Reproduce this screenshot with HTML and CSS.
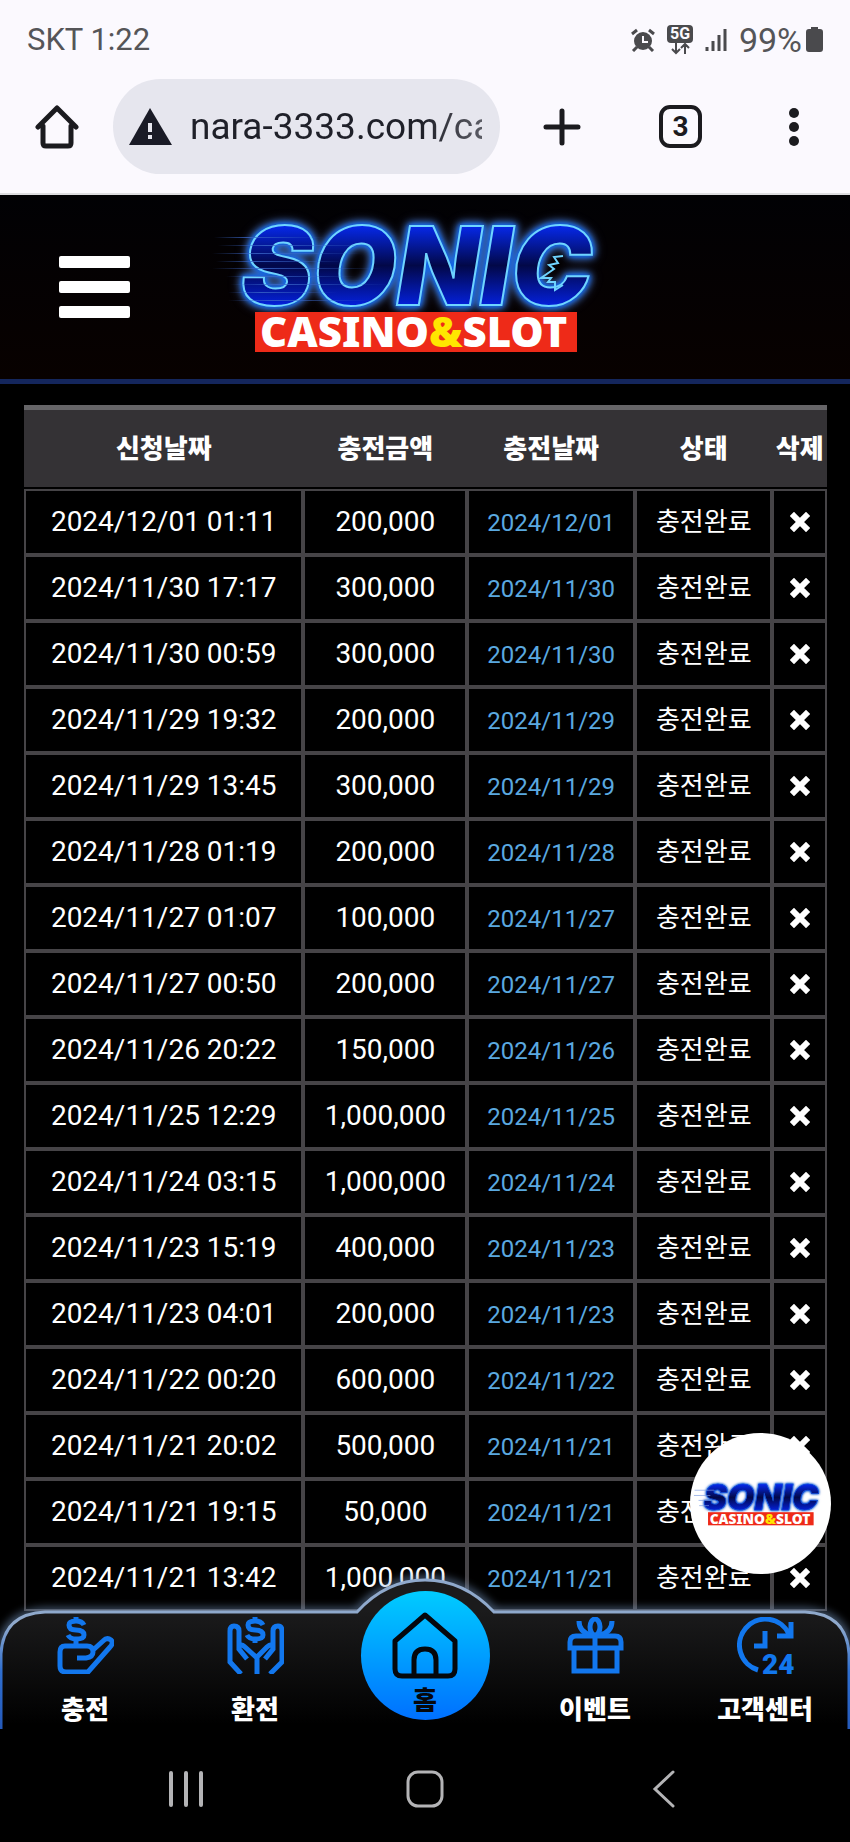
FILE: index.html
```html
<!DOCTYPE html>
<html lang="ko">
<head>
    <meta charset="UTF-8">
    <meta name="viewport" content="width=device-width, initial-scale=1.0">
    <title>SONIC CASINO&amp;SLOT</title>
    <link rel="stylesheet" href="styles.css">
</head>
<body>
    <!-- shared symbols -->
    <svg class="symbols" aria-hidden="true">
        <defs>
            <linearGradient id="sonicFill" x1="0" y1="0" x2="0" y2="1">
                <stop offset="0.2" stop-color="#0628e8"/>
                <stop offset="0.5" stop-color="#020848"/>
                <stop offset="0.8" stop-color="#0420d8"/>
            </linearGradient>
            <linearGradient id="speedFill" x1="0" x2="1">
                <stop offset="0" stop-color="#3a66c8" stop-opacity="0"/>
                <stop offset="0.3" stop-color="#3a66c8" stop-opacity="0.8"/>
                <stop offset="1" stop-color="#3a66c8" stop-opacity="0"/>
            </linearGradient>
            <filter id="glow" x="-10%" y="-30%" width="120%" height="160%">
                <feGaussianBlur stdDeviation="4"/>
            </filter>
        </defs>
        <symbol id="x" viewBox="0 0 20 20">
            <path d="M4 4 16 16M16 4 4 16" stroke="#fff" stroke-width="6" stroke-linecap="square" stroke-linejoin="round"/>
        </symbol>
    </svg>

    <div class="phone">
        <div class="status-bar">
            <span>SKT 1:22</span>
            <div class="status-icons">
                <svg width="24" height="24" viewBox="0 0 24 24">
                    <circle cx="12" cy="13" r="9" fill="#4a4a4d"/>
                    <path d="M1 6 6 2M18 2l5 4M6 19l-4 4M18 19l4 4" stroke="#4a4a4d" stroke-width="3"/>
                    <path d="M12 8v6h5" fill="none" stroke="#fbf9fe" stroke-width="2"/>
                </svg>
                <svg class="five-g" width="26" height="30" viewBox="0 0 26 30">
                    <rect width="26" height="18" rx="4" fill="#4a4a4d"/>
                    <text x="13" y="14" text-anchor="middle">5G</text>
                    <path d="M9 18v9M5 24l4 4 4-4M18 29v-9M14 23l4-4 4 4" fill="none" stroke="#4a4a4d" stroke-width="2"/>
                </svg>
                <svg width="22" height="24" viewBox="0 0 22 24">
                    <path d="M2 19v4M8 13v10M14 7v16M20 1v22" stroke="#4a4a4d" stroke-width="3"/>
                </svg>
                <span class="battery-level">99%</span>
                <svg class="battery" width="17" height="25" viewBox="0 0 17 25">
                    <path d="M5 0h7v2h2q3 0 3 3v17q0 3-3 3H3q-3 0-3-3V5q0-3 3-3h2z" fill="#4a4a4d"/>
                </svg>
            </div>
        </div>

        <div class="browser-bar">
            <button class="bar-button" type="button" aria-label="Home">
                <svg width="44" height="44" viewBox="0 0 44 44" fill="none" stroke="#1b1b1f" stroke-width="5" stroke-linejoin="round" stroke-linecap="round">
                    <path d="M3 22 22 3l19 19M8 21v17q0 3 3 3h22q3 0 3-3V21"/>
                </svg>
            </button>
            <div class="address">
                <svg width="43" height="37" viewBox="0 0 43 37">
                    <path d="M21 0 43 37H0z" fill="#1a1b26"/>
                    <path d="M21 15v9M21 27v4" stroke="#e6e6ee" stroke-width="4"/>
                </svg>
                <input type="text" aria-label="Address" value="nara-3333.com/ca">
            </div>
            <button class="bar-button new-tab" type="button" aria-label="New tab">
                <svg width="38" height="38" viewBox="0 0 38 38" stroke="#1b1b1f" stroke-width="5" stroke-linecap="round">
                    <path d="M19 3v32M3 19h32"/>
                </svg>
            </button>
            <button class="bar-button" type="button" aria-label="Tabs"><span class="tab-count">3</span></button>
            <button class="bar-button" type="button" aria-label="More">
                <svg width="10" height="38" viewBox="0 0 10 38" fill="#1b1b1f">
                    <circle cx="5" cy="5" r="5"/><circle cx="5" cy="19" r="5"/><circle cx="5" cy="33" r="5"/>
                </svg>
            </button>
        </div>

        <div class="site">
            <header class="site-header">
                <button class="menu-button" type="button" aria-label="Menu">
                    <span></span><span></span><span></span>
                </button>
                <a class="logo" href="#" aria-label="SONIC CASINO&amp;SLOT">
                    <svg viewBox="0 0 430 170">
                        <text class="logo-word" x="41" y="103">SONIC</text>
                        <path d="M363 54l-9 1 4 6-9 2 5 4-13 9 10 0-3 4 7 0 0 8 8-5" fill="none" stroke="#6fd4ff" stroke-width="2"/>
                        <g fill="url(#speedFill)">
                            <rect x="14" y="35" width="110" height="1"/>
                            <rect x="18" y="43" width="160" height="1"/>
                            <rect x="12" y="51" width="150" height="1"/>
                            <rect x="16" y="59" width="130" height="1"/>
                            <rect x="12" y="66" width="170" height="1"/>
                            <rect x="26" y="74" width="130" height="1"/>
                            <rect x="30" y="82" width="160" height="1"/>
                            <rect x="28" y="90" width="110" height="1"/>
                            <rect x="28" y="98" width="150" height="1"/>
                        </g>
                        <rect x="55" y="110" width="322" height="40" fill="#ee2a18"/>
                        <text class="logo-sub" x="60" y="145">CASINO<tspan class="logo-amp">&amp;</tspan>SLOT</text>
                    </svg>
                </a>
            </header>

            <main>
                <table class="history">
                    <colgroup>
                        <col class="col-request"><col class="col-amount"><col class="col-date"><col class="col-state"><col class="col-delete">
                    </colgroup>
                    <thead>
                        <tr><th>신청날짜</th><th>충전금액</th><th>충전날짜</th><th>상태</th><th>삭제</th></tr>
                    </thead>
                    <tbody>
                        <tr><td>2024/12/01 01:11</td><td>200,000</td><td><a href="#">2024/12/01</a></td><td class="state">충전완료</td><td><button type="button" aria-label="삭제"><svg><use href="#x"/></svg></button></td></tr>
                        <tr><td>2024/11/30 17:17</td><td>300,000</td><td><a href="#">2024/11/30</a></td><td class="state">충전완료</td><td><button type="button" aria-label="삭제"><svg><use href="#x"/></svg></button></td></tr>
                        <tr><td>2024/11/30 00:59</td><td>300,000</td><td><a href="#">2024/11/30</a></td><td class="state">충전완료</td><td><button type="button" aria-label="삭제"><svg><use href="#x"/></svg></button></td></tr>
                        <tr><td>2024/11/29 19:32</td><td>200,000</td><td><a href="#">2024/11/29</a></td><td class="state">충전완료</td><td><button type="button" aria-label="삭제"><svg><use href="#x"/></svg></button></td></tr>
                        <tr><td>2024/11/29 13:45</td><td>300,000</td><td><a href="#">2024/11/29</a></td><td class="state">충전완료</td><td><button type="button" aria-label="삭제"><svg><use href="#x"/></svg></button></td></tr>
                        <tr><td>2024/11/28 01:19</td><td>200,000</td><td><a href="#">2024/11/28</a></td><td class="state">충전완료</td><td><button type="button" aria-label="삭제"><svg><use href="#x"/></svg></button></td></tr>
                        <tr><td>2024/11/27 01:07</td><td>100,000</td><td><a href="#">2024/11/27</a></td><td class="state">충전완료</td><td><button type="button" aria-label="삭제"><svg><use href="#x"/></svg></button></td></tr>
                        <tr><td>2024/11/27 00:50</td><td>200,000</td><td><a href="#">2024/11/27</a></td><td class="state">충전완료</td><td><button type="button" aria-label="삭제"><svg><use href="#x"/></svg></button></td></tr>
                        <tr><td>2024/11/26 20:22</td><td>150,000</td><td><a href="#">2024/11/26</a></td><td class="state">충전완료</td><td><button type="button" aria-label="삭제"><svg><use href="#x"/></svg></button></td></tr>
                        <tr><td>2024/11/25 12:29</td><td>1,000,000</td><td><a href="#">2024/11/25</a></td><td class="state">충전완료</td><td><button type="button" aria-label="삭제"><svg><use href="#x"/></svg></button></td></tr>
                        <tr><td>2024/11/24 03:15</td><td>1,000,000</td><td><a href="#">2024/11/24</a></td><td class="state">충전완료</td><td><button type="button" aria-label="삭제"><svg><use href="#x"/></svg></button></td></tr>
                        <tr><td>2024/11/23 15:19</td><td>400,000</td><td><a href="#">2024/11/23</a></td><td class="state">충전완료</td><td><button type="button" aria-label="삭제"><svg><use href="#x"/></svg></button></td></tr>
                        <tr><td>2024/11/23 04:01</td><td>200,000</td><td><a href="#">2024/11/23</a></td><td class="state">충전완료</td><td><button type="button" aria-label="삭제"><svg><use href="#x"/></svg></button></td></tr>
                        <tr><td>2024/11/22 00:20</td><td>600,000</td><td><a href="#">2024/11/22</a></td><td class="state">충전완료</td><td><button type="button" aria-label="삭제"><svg><use href="#x"/></svg></button></td></tr>
                        <tr><td>2024/11/21 20:02</td><td>500,000</td><td><a href="#">2024/11/21</a></td><td class="state">충전완료</td><td><button type="button" aria-label="삭제"><svg><use href="#x"/></svg></button></td></tr>
                        <tr><td>2024/11/21 19:15</td><td>50,000</td><td><a href="#">2024/11/21</a></td><td class="state">충전완료</td><td><button type="button" aria-label="삭제"><svg><use href="#x"/></svg></button></td></tr>
                        <tr><td>2024/11/21 13:42</td><td>1,000,000</td><td><a href="#">2024/11/21</a></td><td class="state">충전완료</td><td><button type="button" aria-label="삭제"><svg><use href="#x"/></svg></button></td></tr>
                    </tbody>
                </table>
            </main>

            <a class="floating" href="#" aria-label="SONIC CASINO&amp;SLOT">
                <svg viewBox="0 0 430 170">
                    <text class="logo-word" x="41" y="103">SONIC</text>
                    <path d="M14 43h60M12 59h50M26 74h40M28 90h30" stroke="#7a9ae0" stroke-width="2"/>
                    <rect x="55" y="110" width="322" height="40" fill="#ee2a18"/>
                    <text class="logo-sub" x="60" y="145">CASINO<tspan class="logo-amp">&amp;</tspan>SLOT</text>
                </svg>
            </a>

            <nav class="site-nav">
                <svg class="nav-shape" viewBox="0 0 850 159" preserveAspectRatio="none">
                    <defs>
                        <linearGradient id="navFill" x1="0" y1="0" x2="0" y2="1">
                            <stop offset="0.2" stop-color="#1b1b1c"/>
                            <stop offset="0.95" stop-color="#000"/>
                        </linearGradient>
                        <linearGradient id="navLine" x1="0" y1="0" x2="0" y2="1">
                            <stop offset="0.3" stop-color="#8fa9cc"/>
                            <stop offset="0.6" stop-color="#2f6fd0"/>
                            <stop offset="1" stop-color="#2458b8"/>
                        </linearGradient>
                    </defs>
                    <path d="M1 162V84Q3 44 45 42H357Q386 10 425 10T494 42H805Q847 44 849 84V162" fill="none" stroke="#7c9cc8" stroke-width="8" opacity="0.6" filter="url(#glow)"/>
                    <path d="M1 162V84Q3 44 45 42H357Q386 10 425 10T494 42H805Q847 44 849 84V162" fill="url(#navFill)" stroke="url(#navLine)" stroke-width="3"/>
                </svg>
                <a href="#">
                    <svg class="nav-icon" viewBox="0 0 57 57" fill="none" stroke="#1277ee" stroke-width="5">
                        <path d="M27 8q-2-4-8-4-7 0-7 4 0 5 7 5 8 0 8 5 0 4-8 4-6 0-8-4M19 0v4M19 21v7"/>
                        <path d="M20 41h9q7-1 7-6 0-6-6-6H8q-5 0-5 6v14q0 6 6 6h22l22-25q4-4 1-7-4-3-8 1L35 34"/>
                    </svg>
                    <span>충전</span>
                </a>
                <a href="#">
                    <svg class="nav-icon" viewBox="0 0 57 57" fill="none" stroke="#1277ee" stroke-width="5">
                        <path d="M36 8q-2-4-8-4-7 0-7 4 0 5 7 5 8 0 8 5 0 4-8 4-6 0-8-4M28 0v4M28 21v5"/>
                        <path d="M14 57 3 45V14q0-5 4-5 5 0 5 5v18l8 10M12 28q3-1 6 2l12 11v16M43 57l12-12V14q0-5-4-5-5 0-5 5v18L38 42M46 28q-3-1-6 2L30 40"/>
                    </svg>
                    <span>환전</span>
                </a>
                <a class="nav-home" href="#">
                    <svg width="68" height="68" viewBox="0 0 68 68" fill="none" stroke="#05070c" stroke-width="5" stroke-linejoin="round">
                        <path d="M4 30 34 4l30 26v28q0 7-7 7H11q-7 0-7-7zM23 65V49q0-11 11-11t11 11v16"/>
                    </svg>
                    <span>홈</span>
                </a>
                <a href="#">
                    <svg class="nav-icon" viewBox="0 0 57 57" fill="none" stroke="#1277ee" stroke-width="5">
                        <path d="M3 31v-6q0-6 6-6h39q6 0 6 6v6zM7 32v22h43V32M28 18v37"/>
                        <ellipse cx="28" cy="10" rx="5" ry="8"/>
                        <path d="M12 4q0 11 12 14M45 4q0 11-12 14"/>
                    </svg>
                    <span>이벤트</span>
                </a>
                <a href="#">
                    <svg class="nav-icon" viewBox="0 0 57 57" fill="none" stroke="#1277ee" stroke-width="5">
                        <path d="M21 53A26 26 0 1 1 52 17M54 5v14H40M28 14v15H17"/>
                        <text class="icon-text" x="25" y="57">24</text>
                    </svg>
                    <span>고객센터</span>
                </a>
            </nav>
        </div>

        <div class="system-nav">
            <button type="button" aria-label="Recents">
                <svg width="34" height="38" viewBox="0 0 34 38" stroke="#b4b4b6" stroke-width="4" stroke-linecap="round"><path d="M2 3v32M17 3v32M32 3v32"/></svg>
            </button>
            <button type="button" aria-label="Home">
                <svg width="38" height="38" viewBox="0 0 38 38" fill="none" stroke="#b4b4b6" stroke-width="3"><rect x="2" y="2" width="34" height="34" rx="10"/></svg>
            </button>
            <button type="button" aria-label="Back">
                <svg width="24" height="38" viewBox="0 0 24 38" fill="none" stroke="#b4b4b6" stroke-width="3" stroke-linecap="round"><path d="M21 2 3 19l18 17"/></svg>
            </button>
        </div>
    </div>
</body>
</html>
```

FILE: styles.css
```css
* {
    box-sizing: border-box;
}
body {
    margin: 0;
    background: #000;
    color: #fff;
    font-family: Roboto, "Noto Sans CJK KR", sans-serif;
}
button {
    padding: 0;
    border: none;
    background: none;
    cursor: pointer;
}
a {
    color: inherit;
    text-decoration: none;
}
svg {
    display: block;
}
.symbols {
    position: absolute;
    width: 0;
    height: 0;
}
.phone {
    display: flex;
    flex-direction: column;
    height: 100vh;
}

/* status bar */
.status-bar {
    display: flex;
    justify-content: space-between;
    align-items: center;
    height: 79px;
    padding: 0 27px;
    background: #fbf9fe;
    color: #555558;
    font-size: 31px;
}
.status-icons {
    display: flex;
    align-items: center;
    gap: 12px;
}
.battery-level {
    font-size: 34px;
}
.battery {
    margin-left: -8px;
}
.five-g text {
    fill: #fbf9fe;
    font-size: 16px;
    font-weight: 700;
}

/* browser bar */
.browser-bar {
    display: flex;
    padding-bottom: 19px;
    border-bottom: 2px solid #dddde0;
    background: #fbf9fe;
}
.bar-button {
    display: flex;
    justify-content: center;
    align-items: center;
    width: 113px;
    height: 95px;
}
.new-tab {
    width: 124px;
}
.address {
    display: flex;
    flex: 1;
    align-items: center;
    gap: 18px;
    min-width: 0;
    height: 95px;
    padding: 0 18px 0 16px;
    border-radius: 48px;
    background: #e6e6ee;
}
.address svg {
    flex: none;
}
.address input {
    flex: 1;
    min-width: 0;
    padding: 0;
    border: none;
    outline: none;
    background: none;
    color: #1f2029;
    font-family: Roboto, sans-serif;
    font-size: 37px;
    -webkit-mask-image: linear-gradient(to left, rgba(0, 0, 0, 0.7), #000 60px);
    mask-image: linear-gradient(to left, rgba(0, 0, 0, 0.7), #000 60px);
}
.tab-count {
    width: 43px;
    height: 43px;
    border: 4px solid #1b1b1f;
    border-radius: 11px;
    color: #1b1b1f;
    font-family: Roboto, sans-serif;
    font-size: 28px;
    font-weight: 700;
    line-height: 35px;
}

/* site */
.site {
    position: relative;
    flex: 1;
    min-height: 0;
    overflow: hidden;
}
.site-header {
    display: flex;
    align-items: center;
    gap: 70px;
    height: 189px;
    padding-left: 59px;
    border-bottom: 5px solid #14265c;
    background: linear-gradient(#010104, #080100);
}
.menu-button {
    display: flex;
    flex-direction: column;
    gap: 13px;
    width: 71px;
}
.menu-button span {
    height: 12px;
    border-radius: 2px;
    background: #fff;
}
.logo svg {
    width: 430px;
    height: 170px;
}
.logo-word {
    fill: url(#sonicFill);
    stroke: #6fd4ff;
    stroke-width: 2px;
    font-family: Inter, sans-serif;
    font-size: 108px;
    font-style: italic;
    font-weight: 900;
    filter: drop-shadow(0 0 2px #0b62e8) drop-shadow(0 0 3px #0b62e8) drop-shadow(0 0 4px #5a7fc8);
}
.floating .logo-word {
    stroke: #1a50d8;
}
.logo-sub {
    fill: #fff;
    font-family: "Noto Sans", sans-serif;
    font-size: 42px;
    font-weight: 900;
}
.logo-amp {
    fill: #ffe600;
}

main {
    padding: 21px 23px 0 24px;
}
.history {
    width: 100%;
    table-layout: fixed;
    border-spacing: 0;
}
.col-request { width: 34.8%; }
.col-amount { width: 20.4%; }
.col-date { width: 20.9%; }
.col-state { width: 17.1%; }
.col-delete { width: 6.8%; }
.history th {
    height: 84px;
    padding: 0 0 4px;
    border-top: 5px solid #666568;
    border-bottom: 2px solid #000;
    background: #343235;
    font-size: 26px;
    font-weight: 900;
    white-space: nowrap;
}
.history td {
    height: 66px;
    padding: 0;
    border: 2px solid #464447;
    font-size: 28px;
    line-height: 34px;
    text-align: center;
    white-space: nowrap;
}
.history td.state {
    font-size: 26px;
}
.history td a {
    color: #5aa9e0;
    font-size: 24px;
}
.history td button {
    display: block;
    margin: 0 auto;
}
.history td svg {
    width: 20px;
    height: 20px;
}

.floating {
    position: absolute;
    right: 19px;
    bottom: 155px;
    display: flex;
    align-items: center;
    width: 141px;
    height: 141px;
    border-radius: 50%;
    background: #fff;
}
.floating svg {
    width: 141px;
    height: 56px;
}

/* bottom menu */
.site-nav {
    position: absolute;
    right: 0;
    bottom: 0;
    left: 0;
    display: grid;
    grid-template-columns: repeat(5, 1fr);
    height: 159px;
}
.nav-shape {
    position: absolute;
    width: 100%;
    height: 100%;
    overflow: visible;
}
.site-nav a {
    position: relative;
    display: flex;
    flex-direction: column;
    align-items: center;
    gap: 20px;
    padding-top: 47px;
    font-size: 26px;
    font-weight: 900;
    line-height: 32px;
    white-space: nowrap;
}
.nav-icon {
    width: 57px;
    height: 57px;
}
.icon-text {
    fill: #1277ee;
    stroke: none;
    font-size: 28px;
    font-weight: 900;
}
.site-nav .nav-home {
    justify-self: center;
    gap: 6px;
    width: 129px;
    height: 129px;
    margin-top: 21px;
    padding-top: 20px;
    border-radius: 50%;
    background: linear-gradient(#00ccff, #0070ff);
    color: #05070c;
    line-height: 32px;
}

/* system navigation */
.system-nav {
    display: grid;
    grid-template-columns: repeat(3, 1fr);
    height: 113px;
    padding: 6px 66px 0;
    background: #000;
}
.system-nav button {
    display: flex;
    justify-content: center;
    align-items: center;
}
```
